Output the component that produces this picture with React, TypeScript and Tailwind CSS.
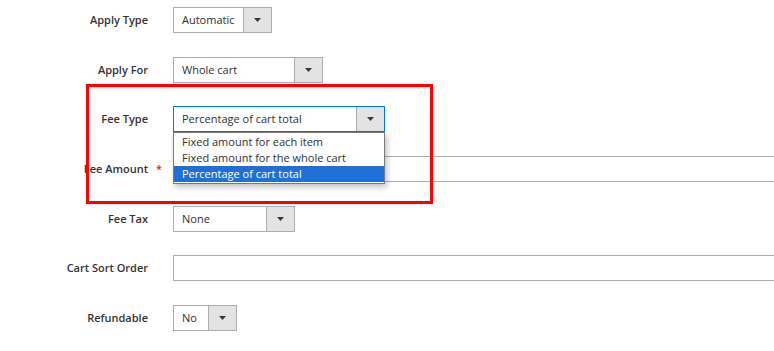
const font = { fontFamily: '"Open Sans", "Liberation Sans", sans-serif' };

function Arrow() {
  return (
    <svg width="7" height="4" viewBox="0 0 7 4" className="block">
      <path d="M0 0 H7 L3.5 4 Z" fill="#41362f" />
    </svg>
  );
}

function Select({ value, width, arrow = 28, focused = false }: { value: string; width: number; arrow?: number; focused?: boolean }) {
  return (
    <div
      className={`flex h-[26px] border bg-white ${focused ? "border-[#007bdb]" : "border-[#adadad]"}`}
      style={{ width }}
    >
      <div className="flex flex-1 items-center pl-2 text-[11px] text-[#303030]">{value}</div>
      <div
        className="flex items-center justify-center border-l border-[#adadad] bg-[#e3e3e3]"
        style={{ width: arrow }}
      >
        <Arrow />
      </div>
    </div>
  );
}

function Input() {
  return <div className="h-[26px] w-[640px] shrink-0 border border-[#adadad] bg-white" />;
}

function Row({ label, h, required = false, children }: { label: string; h: number; required?: boolean; children: React.ReactNode }) {
  return (
    <div className="flex items-start" style={{ height: h }}>
      <div className="flex h-[26px] w-[148px] shrink-0 items-center justify-end">
        <span className="relative text-[11px] font-semibold text-[#333333]">
          {label}
          {required && <span className="absolute left-[calc(100%+8px)] top-0 text-[#e22626]">*</span>}
        </span>
      </div>
      <div className="ml-[25px] flex-1 relative">{children}</div>
    </div>
  );
}

export default function App() {
  return (
    <div className="relative h-[351px] w-[774px] overflow-hidden bg-white" style={font}>
      <div className="flex flex-col pt-[7px]">
        <Row label="Apply Type" h={50}>
          <Select value="Automatic" width={99} />
        </Row>
        <Row label="Apply For" h={49}>
          <Select value="Whole cart" width={150} />
        </Row>
        <Row label="Fee Type" h={50}>
          <Select value="Percentage of cart total" width={212} focused />
        </Row>
        <Row label="Fee Amount" h={50} required>
          <Input />
        </Row>
        <Row label="Fee Tax" h={49}>
          <Select value="None" width={122} />
        </Row>
        <Row label="Cart Sort Order" h={50}>
          <Input />
        </Row>
        <Row label="Refundable" h={40}>
          <Select value="No" width={64} />
        </Row>
      </div>

      {/* open option list of Fee Type */}
      <div className="absolute left-[173px] top-[132px] w-[212px] border border-[#7a7a7a] bg-white py-px text-[11px] leading-[16px] text-[#303030] shadow-[2px_3px_6px_rgba(0,0,0,0.25)]">
        <div className="pl-2">Fixed amount for each item</div>
        <div className="pl-2">Fixed amount for the whole cart</div>
        <div className="bg-[#1e6fd6] pl-2 text-white">Percentage of cart total</div>
      </div>

      {/* highlight box */}
      <div className="pointer-events-none absolute left-[86px] top-[84px] h-[120px] w-[347px] border-[3px] border-[#ff0000]" />
    </div>
  );
}
